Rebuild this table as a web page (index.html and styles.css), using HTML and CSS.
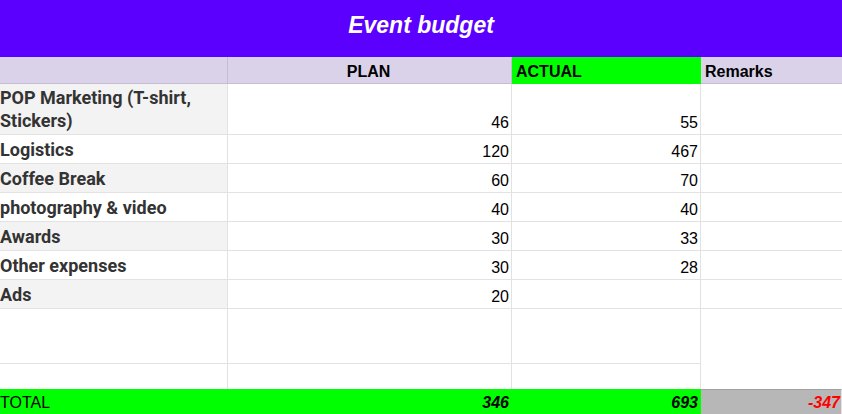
FILE: index.html
```html
<!DOCTYPE html>
<html>
<head>
<meta charset="utf-8">
<link rel="stylesheet" href="styles.css">
</head>
<body>
<div class="title">Event budget</div>
<div class="sheet">
  <div class="c hd"></div>
  <div class="c hd center">PLAN</div>
  <div class="c hd green">ACTUAL</div>
  <div class="c hd left">Remarks</div>

  <div class="c lbl alt">POP Marketing (T-shirt, Stickers)</div>
  <div class="c num">46</div>
  <div class="c num">55</div>
  <div class="c"></div>

  <div class="c lbl">Logistics</div>
  <div class="c num">120</div>
  <div class="c num">467</div>
  <div class="c"></div>

  <div class="c lbl alt">Coffee Break</div>
  <div class="c num">60</div>
  <div class="c num">70</div>
  <div class="c"></div>

  <div class="c lbl">photography &amp; video</div>
  <div class="c num">40</div>
  <div class="c num">40</div>
  <div class="c"></div>

  <div class="c lbl alt">Awards</div>
  <div class="c num">30</div>
  <div class="c num">33</div>
  <div class="c"></div>

  <div class="c lbl">Other expenses</div>
  <div class="c num">30</div>
  <div class="c num">28</div>
  <div class="c"></div>

  <div class="c lbl alt">Ads</div>
  <div class="c num">20</div>
  <div class="c num"></div>
  <div class="c"></div>

  <div class="c"></div>
  <div class="c"></div>
  <div class="c"></div>
  <div class="c merged"></div>

  <div class="c nob"></div>
  <div class="c nob"></div>
  <div class="c nob"></div>

  <div class="c tot">TOTAL</div>
  <div class="c tot num bi">346</div>
  <div class="c tot num bi">693</div>
  <div class="c diff num bi">-347</div>
</div>
</body>
</html>
```
FILE: styles.css
```css
html, body {
  margin: 0;
  padding: 0;
  background: #ffffff;
  overflow: hidden;
}

body {
  width: 842px;
  height: 414px;
  font-family: "Liberation Sans", Arial, sans-serif;
}

.title {
  height: 57px;
  box-sizing: border-box;
  padding-top: 12px;
  background: #5b00ff;
  color: #ffffff;
  font-size: 23px;
  line-height: 26px;
  font-weight: bold;
  font-style: italic;
  text-align: center;
}

.sheet {
  display: grid;
  grid-template-columns: 228px 284px 189px 141px;
  grid-template-rows: 27px 51px 29px 29px 29px 29px 29px 29px 55px 25px 25px;
}

.c {
  box-sizing: border-box;
  border-right: 1px solid #e2e2e2;
  border-bottom: 1px solid #e2e2e2;
  display: flex;
  align-items: flex-end;
  padding: 0 2px 2px 0;
  font-size: 16px;
  color: #000000;
  min-width: 0;
}

.c:nth-child(4n) {
  border-right: none;
}

.hd {
  background: #d9d2e9;
  border-bottom-color: #c6bcd6;
  border-right-color: #c6bcd6;
  font-weight: bold;
}

.hd.center {
  justify-content: center;
}

.hd.green {
  background: #00ff00;
  border-right-color: #00ff00;
  border-bottom-color: #00ff00;
  padding-left: 4px;
}

.hd.left {
  padding-left: 4px;
}

.lbl {
  font-family: Roboto, "Liberation Sans", sans-serif;
  font-size: 18px;
  font-weight: bold;
  color: #333333;
  line-height: 23px;
}

.lbl.alt {
  background: #f3f3f3;
}

.num {
  justify-content: flex-end;
}

.merged {
  grid-row: span 2;
  border-bottom: none;
}

.nob {
  border-bottom: none;
}

.tot {
  background: #00ff00;
  border-right-color: transparent;
  border-bottom: none;
}

.bi {
  font-weight: bold;
  font-style: italic;
}

.diff {
  grid-column: 4;
  background: #b7b7b7;
  border-top: 1px solid #a2a2a2;
  border-bottom: none;
  padding-right: 1px;
  color: #ff0000;
}
```
